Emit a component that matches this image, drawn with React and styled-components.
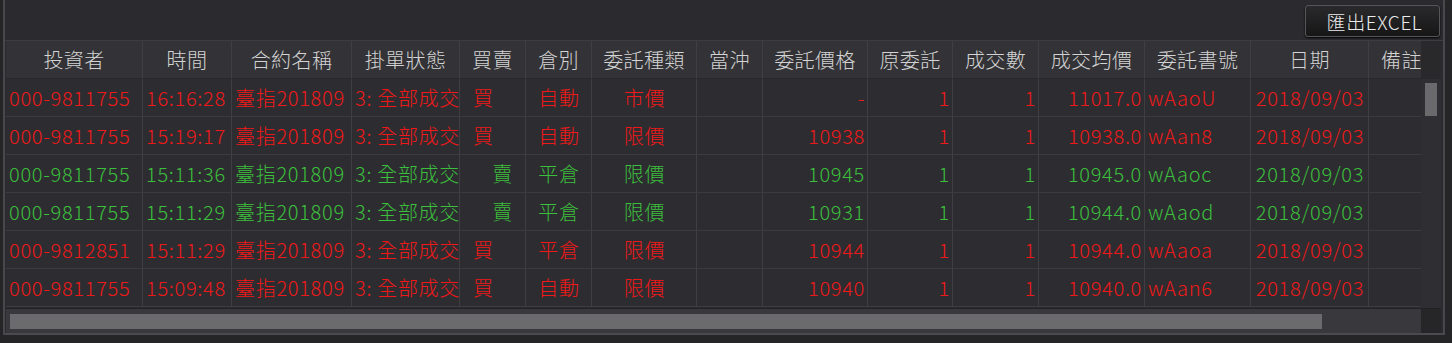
import React from "react";
import styled, { createGlobalStyle } from "styled-components";

const Global = createGlobalStyle`
  html, body { margin: 0; padding: 0; background: #252528; }
  body { font-family: "Microsoft JhengHei", "Noto Sans CJK TC", "Noto Sans", sans-serif; font-weight: 300; }
`;

const COLS = [137, 89, 120, 108, 66, 66, 105, 66, 105, 85, 86, 106, 106, 118, 66];
const gridCols = COLS.map((w) => `${w}px`).join(" ");

const Frame = styled.div`
  margin-left: 3px;
  width: 1442px;
  height: 335px;
  background: #2b2b2f;
  border-left: 2px solid #47474c;
  border-right: 2px solid #47474c;
  border-bottom: 2px solid #4a4a4f;
  display: flex;
  flex-direction: column;
  box-sizing: border-box;
`;

const Toolbar = styled.div`
  height: 41px;
  display: flex;
  justify-content: flex-end;
  align-items: center;
  padding-right: 3px;
  box-sizing: border-box;
  border-bottom: 1px solid #3c3c41;
`;

const ExportButton = styled.button`
  width: 135px;
  height: 32px;
  margin-top: 2px;
  background: linear-gradient(#2a2a2c, #161617);
  border: 1px solid #55555a;
  border-radius: 3px;
  color: #ececec;
  font-family: inherit;
  font-weight: 300;
  font-size: 19px;
  letter-spacing: 0.6px;
  padding: 0 0 0 4px;
  box-shadow: 0 1px 2px #000;
`;

const GridWrap = styled.div`
  display: grid;
  grid-template-columns: 1fr 20px;
  grid-template-rows: 267px 25px;
  margin-left: 1px;
  width: 1435px;
`;

const Viewport = styled.div`
  overflow: hidden;
  background: #2c2c30;
`;

const Table = styled.div`
  display: grid;
  grid-template-columns: ${gridCols};
  width: max-content;
`;

const HeadCell = styled.div`
  height: 38px;
  box-sizing: border-box;
  background: #333337;
  border-right: 1px solid #3e3e43;
  border-bottom: 1px solid #28282b;
  color: #d3d3d3;
  font-size: 20px;
  letter-spacing: 0.4px;
  display: flex;
  align-items: center;
  justify-content: center;
  white-space: nowrap;
`;

const Cell = styled.div`
  height: 38px;
  box-sizing: border-box;
  background: #2d2d31;
  border-right: 1px solid #3e3e43;
  border-bottom: 1px solid #3b3b40;
  color: ${(p) => (p.$side === "buy" ? "#f01818" : "#3cbf3c")};
  font-size: 20px;
  letter-spacing: 0.7px;
  display: flex;
  align-items: center;
  justify-content: ${(p) =>
    p.$align === "right" ? "flex-end" : p.$align === "center" ? "center" : "flex-start"};
  padding: 0 2px 0 3px;
  white-space: nowrap;
  overflow: hidden;
`;

const SideMark = styled.span`
  padding-left: ${(p) => (p.$side === "buy" ? "10px" : "0")};
  padding-right: ${(p) => (p.$side === "buy" ? "0" : "10px")};
`;

const VTrack = styled.div`
  background: #2f2f33;
  display: flex;
  flex-direction: column;
  align-items: center;
`;

const VHead = styled.div`
  height: 38px;
  width: 100%;
  background: #29292c;
`;

const VThumb = styled.div`
  margin-top: 4px;
  width: 12px;
  height: 33px;
  background: #6a6a6d;
`;

const HTrack = styled.div`
  background: #39393d;
  display: flex;
  align-items: center;
  padding-left: 4px;
  border-top: 1px solid #222225;
`;

const HThumb = styled.div`
  width: 1312px;
  height: 15px;
  background: #6b6b6d;
`;

const Corner = styled.div`
  background: #262628;
  border-top: 1px solid #222225;
`;

const headers = [
  "投資者", "時間", "合約名稱", "掛單狀態", "買賣", "倉別", "委託種類", "當沖",
  "委託價格", "原委託", "成交數", "成交均價", "委託書號", "日期", "備註",
];

const rows = [
  ["000-9811755", "16:16:28", "臺指201809", "3: 全部成交", "買", "自動", "市價", "", "-", "1", "1", "11017.0", "wAaoU", "2018/09/03", ""],
  ["000-9811755", "15:19:17", "臺指201809", "3: 全部成交", "買", "自動", "限價", "", "10938", "1", "1", "10938.0", "wAan8", "2018/09/03", ""],
  ["000-9811755", "15:11:36", "臺指201809", "3: 全部成交", "賣", "平倉", "限價", "", "10945", "1", "1", "10945.0", "wAaoc", "2018/09/03", ""],
  ["000-9811755", "15:11:29", "臺指201809", "3: 全部成交", "賣", "平倉", "限價", "", "10931", "1", "1", "10944.0", "wAaod", "2018/09/03", ""],
  ["000-9812851", "15:11:29", "臺指201809", "3: 全部成交", "買", "平倉", "限價", "", "10944", "1", "1", "10944.0", "wAaoa", "2018/09/03", ""],
  ["000-9811755", "15:09:48", "臺指201809", "3: 全部成交", "買", "自動", "限價", "", "10940", "1", "1", "10940.0", "wAan6", "2018/09/03", ""],
];

const aligns = ["left", "left", "left", "left", null, "center", "center", "left", "right", "right", "right", "right", "left", "center", "left"];

export default function App() {
  return (
    <>
      <Global />
      <Frame>
        <Toolbar>
          <ExportButton>匯出EXCEL</ExportButton>
        </Toolbar>
        <GridWrap>
          <Viewport>
            <Table>
              {headers.map((h) => (
                <HeadCell key={h}>{h}</HeadCell>
              ))}
              {rows.map((r, i) => {
                const side = r[4] === "買" ? "buy" : "sell";
                return r.map((v, j) => (
                  <Cell
                    key={`${i}-${j}`}
                    $side={side}
                    $align={j === 4 ? (side === "buy" ? "left" : "right") : aligns[j]}
                  >
                    {j === 4 ? <SideMark $side={side}>{v}</SideMark> : v}
                  </Cell>
                ));
              })}
            </Table>
          </Viewport>
          <VTrack>
            <VHead />
            <VThumb />
          </VTrack>
          <HTrack>
            <HThumb />
          </HTrack>
          <Corner />
        </GridWrap>
      </Frame>
    </>
  );
}
